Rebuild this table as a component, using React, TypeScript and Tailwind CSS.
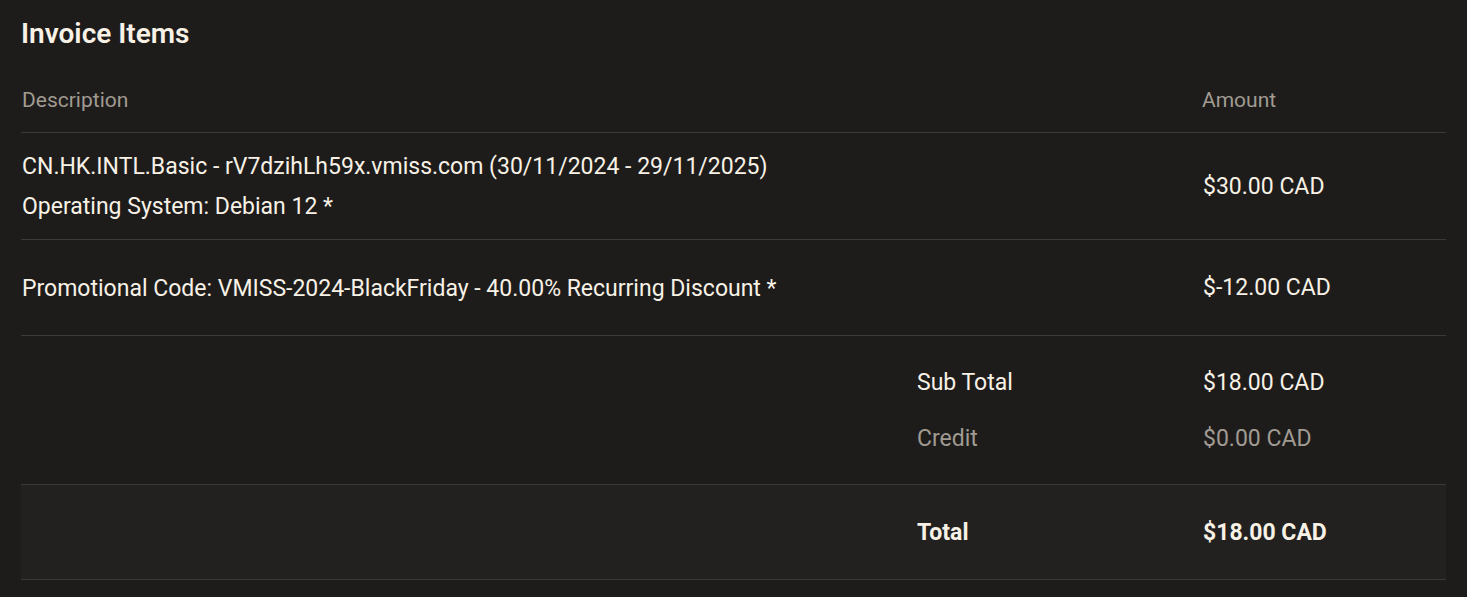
import React from 'react';

interface LineItem {
  lines: string[];
  amount: string;
  height: string;
}

const items: LineItem[] = [
  {
    lines: [
      'CN.HK.INTL.Basic - rV7dzihLh59x.vmiss.com (30/11/2024 - 29/11/2025)',
      'Operating System: Debian 12 *',
    ],
    amount: '$30.00 CAD',
    height: 'h-[107px]',
  },
  {
    lines: ['Promotional Code: VMISS-2024-BlackFriday - 40.00% Recurring Discount *'],
    amount: '$-12.00 CAD',
    height: 'h-[96px]',
  },
];

export default function App() {
  return (
    <div className="min-h-screen bg-[#1e1c1b] px-[21px] pt-[17px] font-['Roboto',sans-serif] text-[23px] text-[#f7f1e6]">
      <h2 className="text-[28px] font-semibold leading-[34px]">Invoice Items</h2>

      <div className="mt-[15px]">
        {/* Header */}
        <div className="grid h-[67px] grid-cols-[1fr_244px] items-center border-b border-[#3c3a38] pt-[4px] text-[21px] text-[#a09b92]">
          <div className="pl-[1px]">Description</div>
          <div>Amount</div>
        </div>

        {/* Items */}
        {items.map((item, i) => (
          <div
            key={i}
            className={`grid ${item.height} grid-cols-[1fr_244px] items-center border-b border-[#3c3a38] pt-[2px]`}
          >
            <div className="flex flex-col gap-[10px] pl-[1px] leading-[30px]">
              {item.lines.map((l) => (
                <div key={l}>{l}</div>
              ))}
            </div>
            <div className="pl-[1px]">{item.amount}</div>
          </div>
        ))}

        {/* Subtotals */}
        <div className="flex h-[149px] flex-col justify-center gap-[26px] border-b border-[#3c3a38] pt-[2px]">
          <div className="grid grid-cols-[1fr_286px_244px] leading-[30px]">
            <div />
            <div className="pl-[1px]">Sub Total</div>
            <div className="pl-[1px]">$18.00 CAD</div>
          </div>
          <div className="grid grid-cols-[1fr_286px_244px] leading-[30px] text-[#a09b92]">
            <div />
            <div className="pl-[1px]">Credit</div>
            <div className="pl-[1px]">$0.00 CAD</div>
          </div>
        </div>

        <div className="grid h-[95px] grid-cols-[1fr_286px_244px] items-center border-b border-[#3c3a38] bg-[#232120] pt-[2px] font-bold">
          <div />
          <div className="pl-[1px]">Total</div>
          <div className="pl-[1px]">$18.00 CAD</div>
        </div>
      </div>
    </div>
  );
}
